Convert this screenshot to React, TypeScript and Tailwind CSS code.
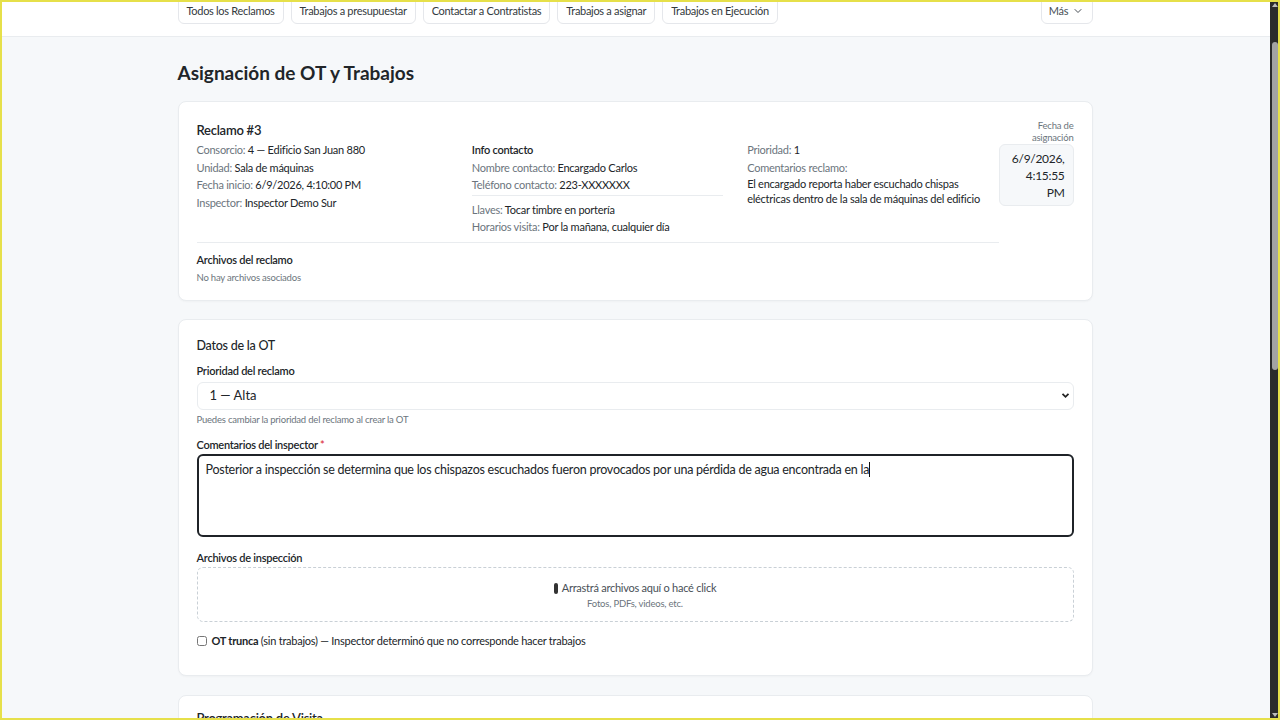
import { ChevronDown } from "lucide-react";

const tabs = [
  "Todos los Reclamos",
  "Trabajos a presupuestar",
  "Contactar a Contratistas",
  "Trabajos a asignar",
  "Trabajos en Ejecución",
];

function Row({ label, value }: { label: string; value: string }) {
  return (
    <div className="leading-[17.5px]">
      <span className="text-[#6c757d]">{label}: </span>
      <span className="text-[#212529]">{value}</span>
    </div>
  );
}

export default function App() {
  return (
    <div
      className="h-screen overflow-hidden bg-[#f6f8fa] text-[#212529] tracking-[-0.25px]"
      style={{ fontFamily: "Lato, 'Noto Sans', sans-serif" }}
    >
      <div className="w-[1270px]">
        {/* barra de pestañas */}
        <div className="h-[37px] bg-white border-b border-[#e9ecef]">
          <div className="w-[915px] mx-auto flex justify-between">
            <div className="flex gap-[7px]">
              {tabs.map((t) => (
                <button
                  key={t}
                  className="-mt-[6px] h-[30px] pt-[4px] px-[8px] flex items-center border border-[#e5e7eb] rounded-md bg-white text-[11px] tracking-[-0.3px] text-[#343a40]"
                >
                  {t}
                </button>
              ))}
            </div>
            <button className="-mt-[6px] h-[30px] pt-[4px] w-[52px] flex items-center justify-center gap-1 border border-[#e5e7eb] rounded-md bg-white text-[11px] text-[#495057]">
              Más
              <ChevronDown size={12} strokeWidth={2} />
            </button>
          </div>
        </div>

        <main className="w-[915px] mx-auto pt-[23px]">
          <h1 className="text-[19px] font-bold leading-[26px] mb-[15px] tracking-normal">Asignación de OT y Trabajos</h1>

          {/* tarjeta reclamo */}
          <section className="bg-white border border-[#e9ecef] rounded-lg shadow-[0_1px_2px_rgba(0,0,0,0.03)] pt-[18px] px-[18px] pb-[15px] flex">
            <div className="flex-1 text-[11px]">
              <div className="text-[13px] font-semibold leading-[20px] mb-px">Reclamo #3</div>
              <div className="grid grid-cols-3 gap-x-6">
                <div>
                  <Row label="Consorcio" value="4 — Edificio San Juan 880" />
                  <Row label="Unidad" value="Sala de máquinas" />
                  <Row label="Fecha inicio" value="6/9/2026, 4:10:00 PM" />
                  <Row label="Inspector" value="Inspector Demo Sur" />
                </div>
                <div>
                  <div className="font-semibold leading-[17.5px]">Info contacto</div>
                  <Row label="Nombre contacto" value="Encargado Carlos" />
                  <Row label="Teléfono contacto" value="223-XXXXXXX" />
                  <div className="border-t border-[#e9ecef] mt-px mb-[5px]" />
                  <Row label="Llaves" value="Tocar timbre en portería" />
                  <Row label="Horarios visita" value="Por la mañana, cualquier día" />
                </div>
                <div>
                  <Row label="Prioridad" value="1" />
                  <div className="leading-[17.5px] text-[#6c757d]">Comentarios reclamo:</div>
                  <p className="leading-[14.5px] mt-px">
                    El encargado reporta haber escuchado chispas eléctricas dentro de la sala de máquinas del edificio
                  </p>
                </div>
              </div>
              <div className="border-t border-[#e9ecef] mt-[6px] mb-[8px]" />
              <div className="font-semibold leading-[17.5px]">Archivos del reclamo</div>
              <div className="text-[9.5px] text-[#6c757d] leading-[14px] mt-[3px] tracking-[-0.2px]">No hay archivos asociados</div>
            </div>
            <div className="w-[75px] shrink-0">
              <div className="text-[9.5px] leading-[12px] text-[#6c757d] text-right tracking-[-0.2px]">
                Fecha de
                <br />
                asignación
              </div>
              <div className="bg-[#f6f8fa] border border-[#e9ecef] rounded-md pt-[5px] pb-[4px] pr-[8px] text-right text-[12px] leading-[17px] tracking-[-0.3px]">
                6/9/2026,
                <br />
                4:15:55
                <br />
                PM
              </div>
            </div>
          </section>

          {/* tarjeta datos OT */}
          <section className="mt-[18px] bg-white border border-[#e9ecef] rounded-lg shadow-[0_1px_2px_rgba(0,0,0,0.03)] pt-[16px] px-[18px] pb-[26px] text-[11px]">
            <h2 className="text-[12.5px] font-medium leading-[20px]">Datos de la OT</h2>
            <label className="block mt-[6px] mb-[3px] font-semibold leading-[17px]">Prioridad del reclamo</label>
            <div className="relative">
              <select
                defaultValue="1"
                className="w-full h-[28px] appearance-none border border-[#e9ecef] rounded-md bg-white pl-[12px] text-[13px] tracking-normal text-[#212529] outline-none"
              >
                <option value="1">1 — Alta</option>
                <option value="2">2 — Media</option>
                <option value="3">3 — Baja</option>
              </select>
              <svg
                className="absolute right-[4px] top-[10px] pointer-events-none"
                width="9"
                height="7"
                viewBox="0 0 9 7"
              >
                <path d="M1.5 1.8 L4.5 4.8 L7.5 1.8" fill="none" stroke="#222" strokeWidth="1.8" />
              </svg>
            </div>
            <div className="text-[9.5px] text-[#6c757d] leading-[13px] mt-[3px] tracking-[-0.2px]">
              Puedes cambiar la prioridad del reclamo al crear la OT
            </div>
            <label className="block mt-[10px] mb-[1px] font-semibold leading-[17px]">
              Comentarios del inspector <span className="text-[#dc3545]">*</span>
            </label>
            <div className="h-[83px] border-2 border-[#1f2328] rounded-md px-[7px] pt-[5px] text-[12.5px] leading-[18px]">
              Posterior a inspección se determina que los chispazos escuchados fueron provocados por una pérdida de agua encontrada en la
              <span className="inline-block w-px h-[15px] bg-[#111] align-[-3px]" />
            </div>
            <label className="block mt-[12px] mb-[1px] font-semibold leading-[17px]">Archivos de inspección</label>
            <div className="h-[55px] border border-dashed border-[#c9d0d6] rounded-md flex flex-col items-center justify-center pt-[2px]">
              <div className="flex items-center gap-[4px] text-[11px] text-[#495057] leading-[16px]">
                <span className="inline-block w-[4px] h-[11px] rounded-full bg-[#333]" />
                Arrastrá archivos aquí o hacé click
              </div>
              <div className="text-[9.5px] text-[#6c757d] leading-[14px] mt-px tracking-[-0.2px]">Fotos, PDFs, videos, etc.</div>
            </div>
            <label className="flex items-center gap-[5px] mt-[10px] leading-[17px]">
              <input type="checkbox" className="w-[10px] h-[10px] m-0" />
              <span>
                <span className="font-bold">OT trunca</span> (sin trabajos) — Inspector determinó que no corresponde hacer trabajos
              </span>
            </label>
          </section>

          {/* tarjeta siguiente */}
          <section className="mt-[19px] bg-white border border-[#e9ecef] rounded-lg pt-[12px] px-[18px] h-[120px]">
            <h2 className="text-[13px] font-semibold leading-[20px]">Programación de Visita</h2>
          </section>
        </main>
      </div>

      {/* barra de scroll */}
      <div className="fixed top-0 right-0 w-[10px] h-screen bg-[#2b2b2b]">
        <div className="absolute top-[3px] left-[2px] w-0 h-0 border-l-[3px] border-r-[3px] border-b-[4px] border-l-transparent border-r-transparent border-b-[#bbb]" />
        <div className="absolute top-[42px] left-[2px] w-[6px] h-[328px] rounded-full bg-[#a3a3a3]" />
        <div className="absolute bottom-[3px] left-[2px] w-0 h-0 border-l-[3px] border-r-[3px] border-t-[4px] border-l-transparent border-r-transparent border-t-[#bbb]" />
      </div>
      {/* marco */}
      <div className="fixed inset-0 border-2 border-[#e6e04a] pointer-events-none" />
    </div>
  );
}
